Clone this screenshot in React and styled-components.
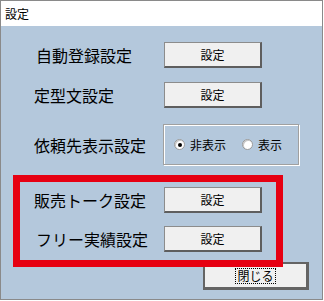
import styled, { createGlobalStyle } from "styled-components";

const GlobalStyle = createGlobalStyle`
  html, body {
    margin: 0;
    padding: 0;
    background: #ffffff;
  }
  body {
    font-family: "Noto Sans CJK JP", "Liberation Sans", sans-serif;
  }
`;

const Window = styled.div`
  position: relative;
  width: 323px;
  height: 300px;
  box-sizing: border-box;
  border: 1px solid #8a8a8a;
  display: flex;
  flex-direction: column;
  background: #b4c8dc;
`;

const TitleBar = styled.div`
  height: 25px;
  flex-shrink: 0;
  background: #ffffff;
  display: flex;
  align-items: center;
  padding-left: 4px;
  font-size: 12px;
  color: #000;
`;

const Body = styled.div`
  flex: 1;
  display: flex;
  flex-direction: column;
  padding-left: 33px;
`;

const Row = styled.div`
  display: flex;
  align-items: center;
  margin-top: ${(p) => p.$top}px;
  height: ${(p) => p.$height || 26}px;
`;

const Label = styled.div`
  width: ${(p) => (p.$wide ? 128 : 130)}px;
  padding-left: ${(p) => p.$indent || 0}px;
  box-sizing: border-box;
  font-size: 16px;
  line-height: 1;
  color: #000;
  white-space: nowrap;
`;

const Button = styled.button`
  width: 98px;
  height: 26px;
  box-sizing: border-box;
  background: #f0f0f0;
  border: 1px solid #8c8c8c;
  border-right: 2px solid #5e5e5e;
  border-bottom: 2px solid #5e5e5e;
  font-family: "Noto Sans CJK JP", sans-serif;
  font-size: 12px;
  color: #000;
  padding: 0;
  display: flex;
  align-items: center;
  justify-content: center;
`;

const GroupBox = styled.div`
  margin-left: -1px;
  width: 136px;
  height: 41px;
  box-sizing: border-box;
  border: 1px solid #a0a0a0;
  box-shadow: 1px 1px 0 #ffffff, inset 1px 1px 0 #ffffff;
  display: flex;
  align-items: center;
  padding-left: 10px;
  gap: 16px;
`;

const RadioItem = styled.label`
  display: flex;
  align-items: center;
  gap: 5px;
  font-size: 12px;
  color: #000;
`;

const RadioCircle = styled.span`
  width: 11px;
  height: 11px;
  box-sizing: border-box;
  border-radius: 50%;
  background: #ffffff;
  border: 1px solid #9a9a9a;
  box-shadow: inset 1px 1px 0 #c8c8c8;
  display: flex;
  align-items: center;
  justify-content: center;
  &::after {
    content: "";
    width: 4px;
    height: 4px;
    border-radius: 50%;
    background: ${(p) => (p.$checked ? "#000" : "transparent")};
  }
`;

const CloseRow = styled.div`
  display: flex;
  margin-top: 10px;
  padding-left: 169px;
`;

const CloseButton = styled.button`
  width: 106px;
  height: 28px;
  box-sizing: border-box;
  background: #f0f0f0;
  border: 2px solid #646464;
  border-right-width: 3px;
  border-bottom-width: 3px;
  padding: 0;
  display: flex;
  align-items: center;
  justify-content: center;
  font-family: "Noto Sans CJK JP", sans-serif;
  font-size: 12px;
  color: #000;
`;

const FocusText = styled.span`
  outline: 1px dotted #000;
  padding: 0 1px;
  line-height: 14px;
`;

const Highlight = styled.div`
  position: absolute;
  left: 12px;
  top: 174px;
  width: 270px;
  height: 92px;
  box-sizing: border-box;
  border: 7px solid #e60012;
  pointer-events: none;
`;

const rows = [
  { top: 16, label: "自動登録設定", indent: 2 },
  { top: 14, label: "定型文設定" },
];

const App = () => {
  return (
    <>
      <GlobalStyle />
      <Window>
        <TitleBar>設定</TitleBar>
        <Body>
          {rows.map((r) => (
            <Row key={r.label} $top={r.top}>
              <Label $indent={r.indent}>{r.label}</Label>
              <Button>設定</Button>
            </Row>
          ))}
          <Row $top={16} $height={41}>
            <Label>依頼先表示設定</Label>
            <GroupBox>
              <RadioItem>
                <RadioCircle $checked />
                非表示
              </RadioItem>
              <RadioItem>
                <RadioCircle />
                表示
              </RadioItem>
            </GroupBox>
          </Row>
          <Row $top={22}>
            <Label>販売トーク設定</Label>
            <Button>設定</Button>
          </Row>
          <Row $top={13}>
            <Label $indent={2}>フリー実績設定</Label>
            <Button>設定</Button>
          </Row>
          <CloseRow>
            <CloseButton>
              <FocusText>閉じる</FocusText>
            </CloseButton>
          </CloseRow>
        </Body>
        <Highlight />
      </Window>
    </>
  );
};

export default App;
